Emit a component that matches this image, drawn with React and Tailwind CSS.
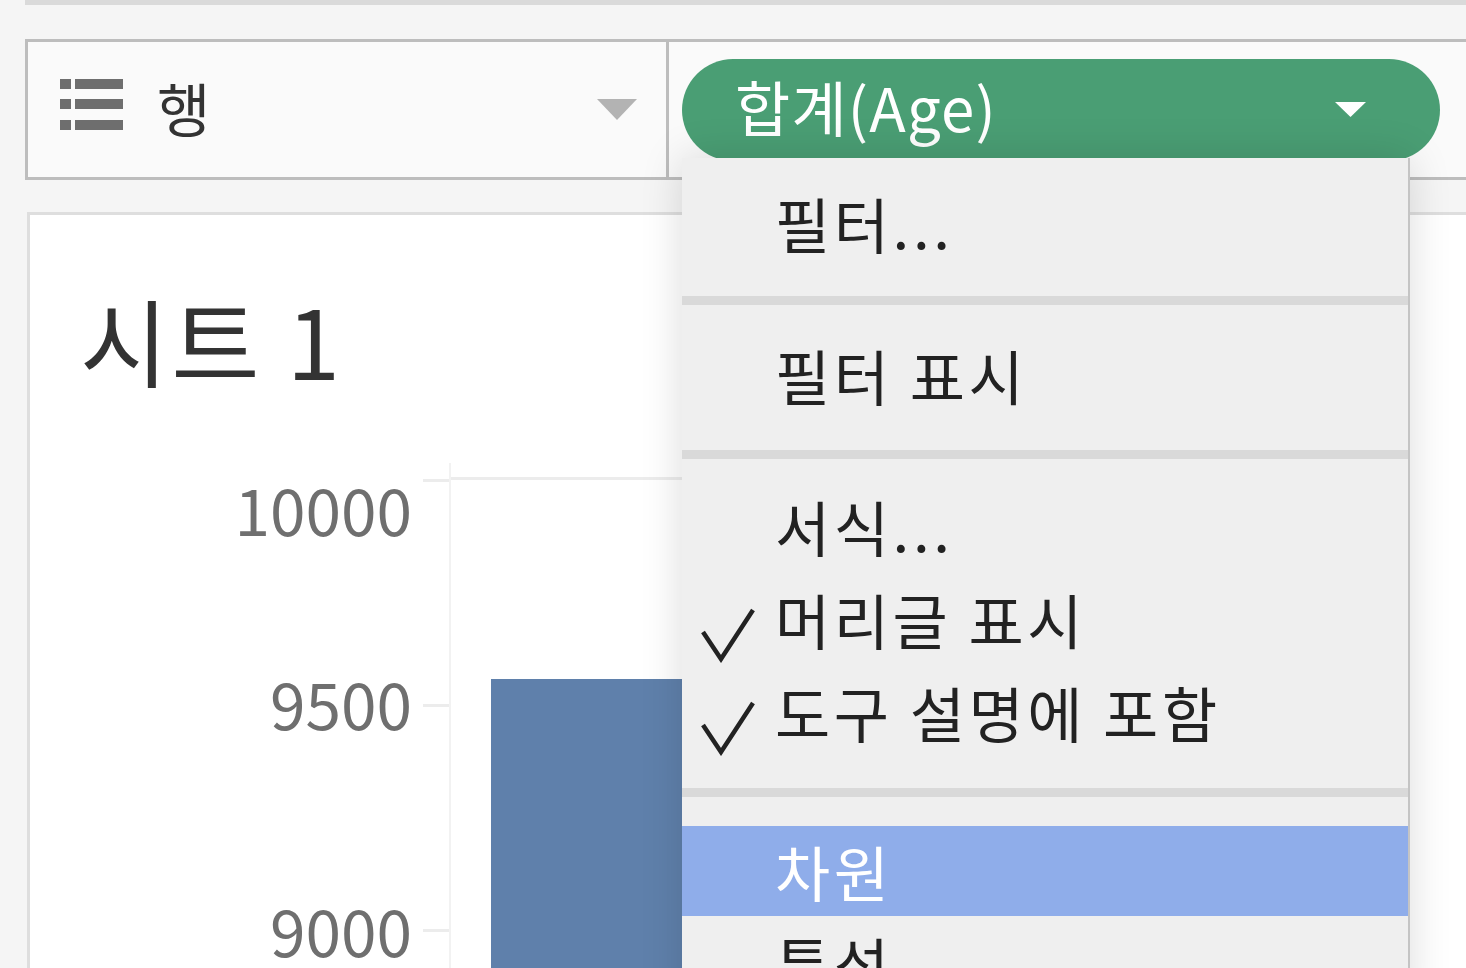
const font = { fontFamily: "'Noto Sans CJK KR', 'Noto Sans', sans-serif" };

function ListIcon() {
  return (
    <svg width="63" height="51" viewBox="0 0 63 51" className="mb-[10px] shrink-0">
      <g fill="#6e6e6e">
        <rect x="0" y="0" width="11" height="10" />
        <rect x="15" y="0" width="48" height="10" />
        <rect x="0" y="20" width="11" height="10" />
        <rect x="15" y="20" width="48" height="10" />
        <rect x="0" y="41" width="11" height="10" />
        <rect x="15" y="41" width="48" height="10" />
      </g>
    </svg>
  );
}

function Caret({ color, w, h }) {
  return (
    <svg width={w} height={h} viewBox={`0 0 ${w} ${h}`} className="shrink-0">
      <polygon points={`0,0 ${w},0 ${w / 2},${h}`} fill={color} />
    </svg>
  );
}

function Check() {
  return (
    <svg width="56" height="56" viewBox="0 0 56 56">
      <polyline
        points="3,25 21,52 53,3"
        fill="none"
        stroke="#222"
        strokeWidth="4.5"
        strokeLinejoin="miter"
      />
    </svg>
  );
}

function MenuItem({ label, checked, active }) {
  return (
    <div
      className={`flex items-center pl-[18px] ${active ? "h-[90px] bg-[#8fadea] text-white" : "h-[93px] text-[#222]"}`}
    >
      <div className="flex w-[75px] items-center pt-[32px]">{checked && <Check />}</div>
      <span className="text-[60px] leading-none tracking-[0.06em]">{label}</span>
    </div>
  );
}

function Separator() {
  return <div className="h-[9px] bg-[#d9d9d9]" />;
}

export default function App() {
  return (
    <div className="relative h-[968px] w-[1466px] overflow-hidden bg-[#f5f5f5]" style={font}>
      {/* top edge */}
      <div className="ml-[25px] h-[5px] bg-[#dadada]" />

      {/* rows shelf */}
      <div className="ml-[25px] mt-[34px] flex h-[141px] w-[1480px] border-[3px] border-[#bdbdbd] bg-[#fafafa]">
        <div className="flex w-[641px] items-center border-r-[3px] border-[#bdbdbd] pl-[32px] pr-[29px]">
          <ListIcon />
          <span className="mb-[6px] ml-[34px] text-[58px] leading-none text-[#333]">행</span>
          <div className="flex-1" />
          <Caret color="#b3b3b3" w={40} h={21} />
        </div>
        <div className="flex items-center pl-[13px]">
          <div className="flex h-[102px] w-[758px] items-center rounded-full bg-[#4a9e74] pl-[53px] pr-[74px] text-white">
            <span className="mb-[8px] text-[60px] leading-none tracking-[0.02em]">합계(Age)</span>
            <div className="flex-1" />
            <Caret color="#ffffff" w={31} h={15} />
          </div>
        </div>
      </div>

      {/* sheet */}
      <div className="ml-[27px] mt-[32px] h-[800px] w-[1480px] border-[3px] border-[#dedede] bg-white">
        <div className="pl-[50px] pt-[76px] text-[96px] leading-none tracking-[0.03em] text-[#333]">시트 1</div>

        <div className="mt-[76px] flex">
          {/* axis labels */}
          <div className="flex w-[382px] flex-col items-end text-[64px] leading-[64px] text-[#6f6f6f]">
            <span className="mt-[13px]">10000</span>
            <span className="mt-[130px]">9500</span>
            <span className="mt-[163px]">9000</span>
          </div>
          {/* ticks */}
          <div className="ml-[11px] flex w-[26px] flex-col">
            <div className="mt-[16px] h-[3px] bg-[#ececec]" />
            <div className="mt-[222px] h-[3px] bg-[#ececec]" />
            <div className="mt-[222px] h-[3px] bg-[#ececec]" />
          </div>
          {/* plot */}
          <div className="h-[520px] flex-1 border-l-[2px] border-[#f2f2f2]">
            <div className="mt-[14px] h-[3px] w-[900px] bg-[#ececec]" />
            <div className="ml-[40px] mt-[199px] h-[400px] w-[260px] bg-[#5f80ab]" />
          </div>
        </div>
      </div>

      {/* context menu */}
      <div className="absolute left-[682px] top-[158px] w-[728px] border-r-[2px] border-[#c4c4c4] bg-[#efefef] shadow-[0_0_40px_rgba(0,0,0,0.14)]">
        <div className="pb-[27px] pt-[18px]">
          <MenuItem label="필터..." />
        </div>
        <Separator />
        <div className="pb-[29px] pt-[23px]">
          <MenuItem label="필터 표시" />
        </div>
        <Separator />
        <div className="pb-[30px] pt-[20px]">
          <MenuItem label="서식..." />
          <MenuItem label="머리글 표시" checked />
          <MenuItem label="도구 설명에 포함" checked />
        </div>
        <Separator />
        <div className="pt-[29px]">
          <MenuItem label="차원" active />
          <MenuItem label="특성" />
        </div>
      </div>
    </div>
  );
}
